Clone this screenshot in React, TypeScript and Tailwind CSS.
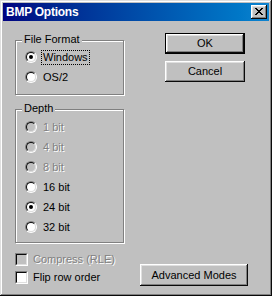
import type { ReactNode } from "react";

const font = "font-['Liberation_Sans',Arial,sans-serif]";

function Radio({ checked, disabled }: { checked?: boolean; disabled?: boolean }) {
  return (
    <span className="block h-3 w-3 shrink-0 rounded-full border border-t-[#808080] border-l-[#808080] border-r-white border-b-white">
      <span
        className={`flex h-full w-full items-center justify-center rounded-full border border-t-[#0a0a0a] border-l-[#0a0a0a] border-r-[#dfdfdf] border-b-[#dfdfdf] ${
          disabled ? "bg-[#c0c0c0]" : "bg-white"
        }`}
      >
        {checked && <span className="block h-1 w-1 rounded-full bg-black" />}
      </span>
    </span>
  );
}

function Check({ disabled }: { disabled?: boolean }) {
  return (
    <span className="block h-[13px] w-[13px] shrink-0 border border-t-[#808080] border-l-[#808080] border-r-white border-b-white">
      <span
        className={`block h-full w-full border border-t-[#0a0a0a] border-l-[#0a0a0a] border-r-[#dfdfdf] border-b-[#dfdfdf] ${
          disabled ? "bg-[#c0c0c0]" : "bg-white"
        }`}
      />
    </span>
  );
}

function Label({ children, disabled, focus }: { children: ReactNode; disabled?: boolean; focus?: boolean }) {
  return (
    <span
      className={`border px-[1px] leading-[13px] whitespace-nowrap ${
        focus ? "border-dotted border-black" : "border-transparent"
      } ${disabled ? "text-[#808080] [text-shadow:1px_1px_0_#fff]" : "text-black"}`}
    >
      {children}
    </span>
  );
}

function RadioRow({ label, checked, disabled, focus }: { label: string; checked?: boolean; disabled?: boolean; focus?: boolean }) {
  return (
    <div className="flex h-5 items-center gap-[4px] pl-[9px]">
      <Radio checked={checked} disabled={disabled} />
      <Label disabled={disabled} focus={focus}>
        {label}
      </Label>
    </div>
  );
}

function Group({ title, className, children }: { title: string; className: string; children: ReactNode }) {
  return (
    <div className={`w-[109px] border border-[#808080] shadow-[1px_1px_0_#fff,inset_1px_1px_0_#fff] ${className}`}>
      <div className="-mt-[8px] ml-[6px] w-fit bg-[#c0c0c0] px-[2px] leading-[13px]">{title}</div>
      {children}
    </div>
  );
}

function Button({ children, className, isDefault }: { children: ReactNode; className: string; isDefault?: boolean }) {
  return (
    <button
      className={`flex items-center justify-center bg-[#c0c0c0] leading-[13px] text-black ${
        isDefault
          ? "border border-black shadow-[inset_-1px_-1px_#0a0a0a,inset_1px_1px_#fff,inset_-2px_-2px_#808080,inset_2px_2px_#dfdfdf]"
          : "shadow-[inset_-1px_-1px_#0a0a0a,inset_1px_1px_#fff,inset_-2px_-2px_#808080,inset_2px_2px_#dfdfdf]"
      } ${className}`}
    >
      {children}
    </button>
  );
}

export default function App() {
  return (
    <div
      className={`flex h-[296px] w-[272px] flex-col bg-[#c0c0c0] p-[3px] text-[11px] text-black ${font} shadow-[inset_-1px_-1px_#0a0a0a,inset_1px_1px_#dfdfdf,inset_-2px_-2px_#808080,inset_2px_2px_#fff]`}
    >
      <div className="flex h-[18px] shrink-0 items-center bg-linear-to-r from-[#000080] to-[#1084d0] pr-[2px] pl-[3px]">
        <span className="text-[12px] font-bold tracking-[-0.25px] text-white">BMP Options</span>
        <button className="ml-auto flex h-[14px] w-4 items-center justify-center bg-[#c0c0c0] shadow-[inset_-1px_-1px_#0a0a0a,inset_1px_1px_#fff,inset_-2px_-2px_#808080,inset_2px_2px_#dfdfdf]">
          <svg width="8" height="7" viewBox="0 0 8 7" shapeRendering="crispEdges" className="-mt-[1px]">
            <path
              d="M0 0h2v1H0zM6 0h2v1H6zM1 1h2v1H1zM5 1h2v1H5zM2 2h4v1H2zM3 3h2v1H3zM2 4h4v1H2zM1 5h2v1H1zM5 5h2v1H5zM0 6h2v1H0zM6 6h2v1H6z"
              fill="#000"
            />
          </svg>
        </button>
      </div>

      <div className="flex flex-1 pb-[7px] pl-[12px]">
        <div className="flex w-[110px] flex-col pt-[19px]">
          <Group title="File Format" className="h-[55px]">
            <div className="mt-[1px]">
              <RadioRow label="Windows" checked focus />
              <RadioRow label="OS/2" />
            </div>
          </Group>
          <Group title="Depth" className="mt-[14px] h-[134px]">
            <div className="mt-[2px]">
              <RadioRow label="1 bit" disabled />
              <RadioRow label="4 bit" disabled />
              <RadioRow label="8 bit" disabled />
              <RadioRow label="16 bit" />
              <RadioRow label="24 bit" checked />
              <RadioRow label="32 bit" />
            </div>
          </Group>
          <div className="mt-[7px]">
            <div className="flex h-[18px] items-center gap-[3px]">
              <Check disabled />
              <Label disabled>Compress (RLE)</Label>
            </div>
            <div className="flex h-[18px] items-center gap-[3px]">
              <Check />
              <Label>Flip row order</Label>
            </div>
          </div>
        </div>

        <div className="flex flex-1 flex-col pt-[12px]">
          <Button isDefault className="ml-[40px] h-[21px] w-[80px]">
            OK
          </Button>
          <Button className="mt-[7px] ml-[40px] h-[21px] w-[80px]">Cancel</Button>
          <Button className="mt-auto ml-[15px] h-[22px] w-[108px]">Advanced Modes</Button>
        </div>
      </div>
    </div>
  );
}
